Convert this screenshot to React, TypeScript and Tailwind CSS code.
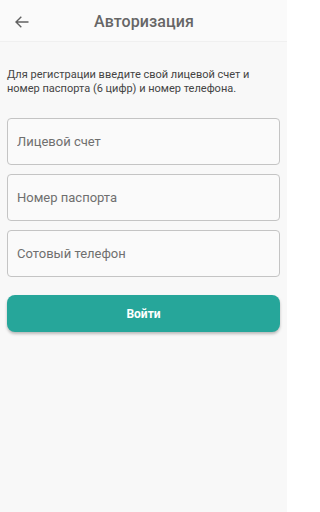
import React from "react";

const fields = ["Лицевой счет", "Номер паспорта", "Сотовый телефон"];

const App = () => {
  return (
    <div className="min-h-[512px] w-[287px] bg-[#f8f8f8] font-['Roboto',sans-serif]">
      {/* шапка */}
      <div className="flex h-[42px] items-center bg-[#fafafa] border-b border-[#f0f0f0]">
        <button className="ml-[14px] mt-[2px] flex h-[14px] w-[16px] items-center justify-center text-[#616161]">
          <svg width="14" height="12" viewBox="0 0 14 12" fill="none" stroke="currentColor" strokeWidth="1.4">
            <path d="M13.5 6H1M6.3 0.7L1 6l5.3 5.3" />
          </svg>
        </button>
        <h1 className="ml-[64px] mt-[2px] text-[16px] font-medium tracking-[0.1px] text-[#666666]">Авторизация</h1>
      </div>

      <div className="px-[7px]">
        <p className="mt-[26px] text-[11px] leading-[14px] text-[#444444]">
          Для регистрации введите свой лицевой счет и номер паспорта (6 цифр) и номер телефона.
        </p>

        <div className="mt-[22px] flex flex-col gap-[9px]">
          {fields.map((f) => (
            <input
              key={f}
              placeholder={f}
              className="h-[47px] w-full rounded-[4px] border border-[#c4c4c4] bg-[#fafafa] px-[9px] text-[13px] text-[#333] placeholder:text-[#6f6f6f] outline-none"
            />
          ))}
        </div>

        <button className="mt-[18px] h-[37px] w-full rounded-[8px] bg-[#26a69a] text-[12px] font-bold text-white shadow-[0_2px_3px_rgba(0,0,0,0.25)]">
          Войти
        </button>
      </div>
    </div>
  );
};

export default App;
